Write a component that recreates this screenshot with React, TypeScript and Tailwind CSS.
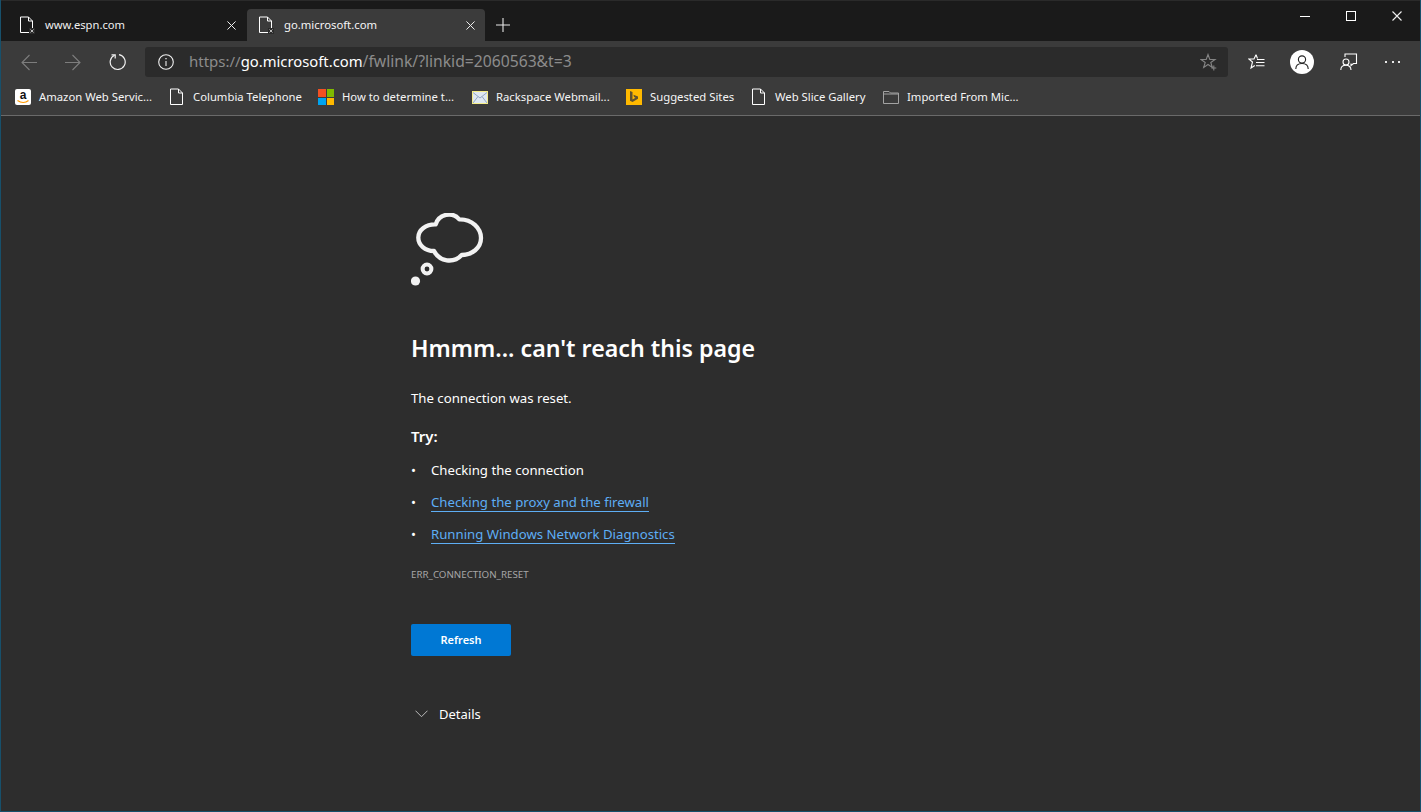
const font = "font-['Noto_Sans','Open_Sans',sans-serif]";

function PageIcon({ broken = false }: { broken?: boolean }) {
  return (
    <svg width="16" height="18" viewBox="0 0 16 18" fill="none" className="shrink-0">
      <path d="M1.5 1H9.5L13.5 5V16.5H1.5Z" stroke="#fff" strokeWidth="1" />
      <path d="M9.5 1V5H13.5" stroke="#fff" strokeWidth="1" />
      {broken && (
        <>
          <rect x="10" y="12" width="6" height="6" fill="#2a2a2a" />
          <path d="M11.5 13.5L14.5 16.5M14.5 13.5L11.5 16.5" stroke="#ccc" strokeWidth="0.9" />
        </>
      )}
    </svg>
  );
}

function CloseIcon({ size = 9 }: { size?: number }) {
  return (
    <svg width={size} height={size} viewBox="0 0 10 10" fill="none" stroke="#f0f0f0" strokeWidth="1.1" className="shrink-0">
      <path d="M0.5 0.5L9.5 9.5M9.5 0.5L0.5 9.5" />
    </svg>
  );
}

function Bookmark({ icon, label, width }: { icon: React.ReactNode; label: string; width: number }) {
  return (
    <div className="flex shrink-0 items-center" style={{ width }}>
      <span className="flex w-[16px] shrink-0 items-center justify-center">{icon}</span>
      <span className="ml-[8px] whitespace-nowrap text-[11.3px] text-[#f5f5f5]">{label}</span>
    </div>
  );
}

function AmazonIcon() {
  return (
    <svg width="16" height="16" viewBox="0 0 16 16">
      <rect width="16" height="16" rx="2" fill="#fff" />
      <text x="8" y="10" textAnchor="middle" fontSize="12" fontWeight="700" fill="#111" fontFamily="Liberation Sans, sans-serif">
        a
      </text>
      <path d="M2.5 11.5C6 14 10.5 14 13.5 11.5" stroke="#f90" strokeWidth="1.2" fill="none" />
    </svg>
  );
}

function WindowsIcon() {
  return (
    <div className="grid h-[16px] w-[16px] grid-cols-2 gap-[1px]">
      <div className="bg-[#f25022]" />
      <div className="bg-[#7fba00]" />
      <div className="bg-[#00a4ef]" />
      <div className="bg-[#ffb900]" />
    </div>
  );
}

function MailIcon() {
  return (
    <svg width="16" height="13" viewBox="0 0 16 13">
      <rect x="0.5" y="0.5" width="15" height="12" fill="#dfe8f2" stroke="#f5ee8a" />
      <path d="M1 1.5L8 7L15 1.5M1 12L6 5.5M15 12L10 5.5" stroke="#93a9c4" fill="none" />
    </svg>
  );
}

function BingIcon() {
  return (
    <svg width="16" height="16" viewBox="0 0 16 16">
      <rect width="16" height="16" fill="#ffb900" />
      <path d="M4 2L6.5 3V10.5L9.5 8.8L8 8L7.4 5.8L12 7.6V9.8L6.5 13L4 11.7Z" fill="#5e5030" />
    </svg>
  );
}

function FolderIcon() {
  return (
    <svg width="16" height="13" viewBox="0 0 16 13" fill="none">
      <path d="M0.5 12.5V0.5H6L7.5 2H15.5V12.5Z" stroke="#a3a3a3" />
      <path d="M0.5 3H15.5" stroke="#a3a3a3" />
    </svg>
  );
}

function BackIcon() {
  return (
    <svg width="16" height="17" viewBox="0 0 16 17" fill="none" stroke="#7d7d7d" strokeWidth="1.1">
      <path d="M16 8.5H1M8.5 1L1 8.5L8.5 16" />
    </svg>
  );
}

function ForwardIcon() {
  return (
    <svg width="16" height="17" viewBox="0 0 16 17" fill="none" stroke="#7d7d7d" strokeWidth="1.1">
      <path d="M0 8.5H15M7.5 1L15 8.5L7.5 16" />
    </svg>
  );
}

function ReloadIcon() {
  return (
    <svg width="18" height="18" viewBox="0 0 18 18" fill="none" stroke="#f0f0f0" strokeWidth="1.2">
      <path d="M6.5 2.2A7.5 7.5 0 1 0 11 1.6" />
      <path d="M3.5 1.8H7.2V5.5" />
    </svg>
  );
}

function InfoIcon() {
  return (
    <svg width="16" height="16" viewBox="0 0 16 16" fill="none" stroke="#f0f0f0" strokeWidth="1.1">
      <circle cx="8" cy="8" r="7.3" />
      <path d="M8 7V12" />
      <path d="M8 4V5.2" strokeWidth="1.3" />
    </svg>
  );
}

function StarPlusIcon() {
  return (
    <svg width="18" height="18" viewBox="0 0 18 18" fill="none" stroke="#858585" strokeWidth="1.1">
      <path d="M8 1.5L9.8 6.5H15L10.8 9.5L12.3 14.5L8 11.5L3.7 14.5L5.2 9.5L1 6.5H6.2Z" />
      <path d="M13.8 12.5V17.5M11.3 15H16.3" />
    </svg>
  );
}

function FavoritesIcon() {
  return (
    <svg width="17" height="16" viewBox="0 0 17 16" fill="none" stroke="#fff" strokeWidth="1.1">
      <path d="M8 0.8L6 5H0.8L4.5 8L3 14L6.8 11.5" />
      <path d="M8 0.8L9.5 4.5M9 5.5H16.5M8 8.5H16.5M8 11.7H16.5" />
    </svg>
  );
}

function CollectionsIcon() {
  return (
    <svg width="18" height="18" viewBox="0 0 18 18" fill="none" stroke="#fff" strokeWidth="1.1">
      <path d="M5 4V1H16.5V10.5H13.5L11 12.5V10.5" />
      <circle cx="6" cy="9" r="3" />
      <path d="M0.8 17C0.8 14 3 12.3 6 12.3C9 12.3 11 14 11 17" />
    </svg>
  );
}

function ThoughtCloud() {
  return (
    <svg width="73" height="74" viewBox="0 0 73 74" fill="none">
      <path
        d="M24.7 11.3A13.8 13.8 0 0 1 48.3 6.3C61 6 70 15 70 25C70 35 61 42 50.7 42A17 17 0 0 1 23 38C14 38 7.3 32 7.3 24.5C7.3 17 15 11 24.7 11.3Z"
        stroke="#f2f2f2"
        strokeWidth="4.3"
        strokeLinejoin="round"
      />
      <circle cx="16" cy="56" r="4.4" stroke="#f2f2f2" strokeWidth="4" />
      <circle cx="4.5" cy="68" r="4.6" fill="#f2f2f2" />
    </svg>
  );
}

export default function App() {
  return (
    <div className={`flex h-[812px] w-full flex-col overflow-hidden border-x border-b border-[#17506b] bg-[#2d2d2d] ${font}`}>
      <div className="flex h-[41px] shrink-0 items-end border-t border-[#2a2a2a] bg-[#1a1a1a]">
        <div className="ml-[7px] flex h-[32px] w-[232px] items-center pl-[11px] pr-[4px]">
          <PageIcon broken />
          <span className="ml-[10px] grow text-[11.2px] text-[#f0f0f0]">www.espn.com</span>
          <CloseIcon />
        </div>
        <div className="ml-[7px] flex h-[32px] w-[238px] items-center rounded-t-[4px] bg-[#3b3b3b] pl-[11px] pr-[10px]">
          <PageIcon broken />
          <span className="ml-[10px] grow text-[11.3px] text-[#f5f5f5]">go.microsoft.com</span>
          <CloseIcon />
        </div>
        <div className="flex h-[32px] w-[36px] items-center justify-center">
          <svg width="14" height="14" viewBox="0 0 14 14" stroke="#e8e8e8" strokeWidth="1.1">
            <path d="M7 0V14M0 7H14" />
          </svg>
        </div>
        <div className="ml-auto flex items-start self-start">
          <div className="flex h-[30px] w-[46px] items-center justify-center">
            <svg width="10" height="10" viewBox="0 0 10 10" stroke="#fff" strokeWidth="1">
              <path d="M0 5.5H10" />
            </svg>
          </div>
          <div className="flex h-[30px] w-[46px] items-center justify-center">
            <svg width="10" height="10" viewBox="0 0 10 10" fill="none" stroke="#fff" strokeWidth="1">
              <rect x="0.5" y="0.5" width="9" height="9" />
            </svg>
          </div>
          <div className="flex h-[30px] w-[46px] items-center justify-center">
            <CloseIcon size={10} />
          </div>
        </div>
      </div>

      <div className="flex h-[42px] shrink-0 items-center bg-[#3b3b3b]">
        <div className="ml-[20px] flex w-[124px] items-center">
          <BackIcon />
          <div className="ml-[28px]">
            <ForwardIcon />
          </div>
          <div className="ml-[27px]">
            <ReloadIcon />
          </div>
        </div>
        <div className="flex h-[30px] w-[1083px] items-center rounded-[3px] bg-[#2b2b2b] pl-[13px] pr-[10px]">
          <InfoIcon />
          <div className="ml-[15px] grow whitespace-nowrap text-[15.7px] text-[#8c8c8c]">
            <span className="text-[15px]">https://</span>
            <span className="text-[14.8px] text-white">go.microsoft.com</span>/fwlink/?linkid=2060563&t=3
          </div>
          <StarPlusIcon />
        </div>
        <div className="ml-[20px] flex items-center">
          <FavoritesIcon />
          <div className="ml-[25px] flex h-[24px] w-[24px] items-center justify-center rounded-full bg-white">
            <svg width="16" height="16" viewBox="0 0 16 16" fill="none" stroke="#222" strokeWidth="1.1">
              <circle cx="8" cy="5.5" r="3.6" />
              <path d="M1.8 15C1.8 11.5 4.5 9.5 8 9.5C11.5 9.5 14.2 11.5 14.2 15" />
            </svg>
          </div>
          <div className="ml-[26px]">
            <CollectionsIcon />
          </div>
          <div className="ml-[27px] flex gap-[4.5px]">
            <div className="h-[2px] w-[2px] bg-[#e8e8e8]" />
            <div className="h-[2px] w-[2px] bg-[#e8e8e8]" />
            <div className="h-[2px] w-[2px] bg-[#e8e8e8]" />
          </div>
        </div>
      </div>

      <div className="flex h-[33px] shrink-0 items-center border-b border-[#6a6a6a] bg-[#3b3b3b] pb-[4px] pl-[14px]">
        <Bookmark icon={<AmazonIcon />} label="Amazon Web Servic..." width={154} />
        <Bookmark icon={<PageIcon />} label="Columbia Telephone" width={149} />
        <Bookmark icon={<WindowsIcon />} label="How to determine t..." width={154} />
        <Bookmark icon={<MailIcon />} label="Rackspace Webmail..." width={154} />
        <Bookmark icon={<BingIcon />} label="Suggested Sites" width={125} />
        <Bookmark icon={<PageIcon />} label="Web Slice Gallery" width={132} />
        <Bookmark icon={<FolderIcon />} label="Imported From Mic..." width={150} />
      </div>

      <div className="flex grow flex-col pl-[410px] pt-[97px] text-white">
        <ThoughtCloud />
        <h1 className="mt-[46px] text-[23.2px] leading-[30px] font-semibold">Hmmm... can't reach this page</h1>
        <p className="mt-[25px] text-[13.2px] leading-[20px]">The connection was reset.</p>
        <p className="mt-[18px] text-[15px] leading-[20px] font-semibold">Try:</p>
        <ul className="mt-[14px] flex flex-col gap-[12px] text-[13.2px] leading-[20px]">
          <li className="flex h-[20px]">
            <span className="w-[20px]">•</span>Checking the connection
          </li>
          <li className="flex h-[20px]">
            <span className="w-[20px]">•</span>
            <a className="mt-[1px] h-[19px] border-b border-[#5eaef5] leading-[18px] text-[#5eaef5]">Checking the proxy and the firewall</a>
          </li>
          <li className="flex h-[20px]">
            <span className="w-[20px]">•</span>
            <a className="mt-[1px] h-[19px] border-b border-[#5eaef5] leading-[18px] text-[#5eaef5]">Running Windows Network Diagnostics</a>
          </li>
        </ul>
        <p className="mt-[23px] text-[9.75px] leading-[16px] text-[#a6a6a6]">ERR_CONNECTION_RESET</p>
        <button className="mt-[41px] h-[32px] w-[100px] rounded-[2px] bg-[#0078d4] text-[11px] font-semibold text-white">
          Refresh
        </button>
        <div className="mt-[48px] flex items-center pl-[4px] text-[13px] leading-[20px]">
          <svg width="13" height="8" viewBox="0 0 13 8" fill="none" stroke="#bbb" strokeWidth="1">
            <path d="M0.5 0.7L6.5 6.7L12.5 0.7" />
          </svg>
          <span className="ml-[11px]">Details</span>
        </div>
      </div>
    </div>
  );
}
